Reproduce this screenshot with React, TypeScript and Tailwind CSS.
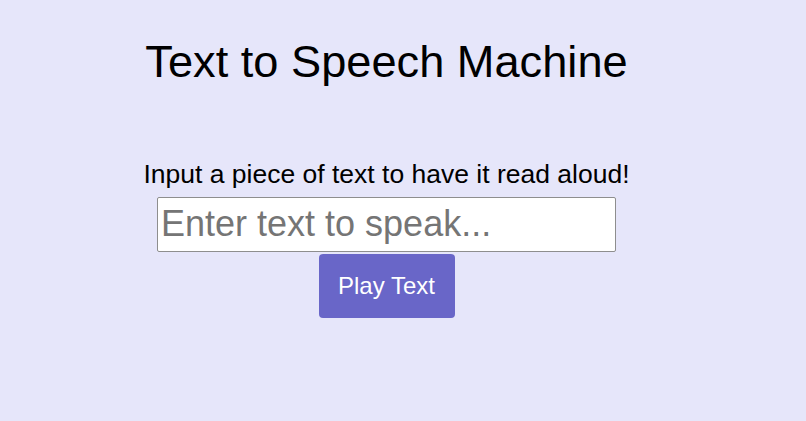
import { useState } from "react";

export default function App() {
  const [text, setText] = useState("");

  const speak = () => {
    if (!text || typeof window === "undefined" || !("speechSynthesis" in window)) return;
    window.speechSynthesis.speak(new SpeechSynthesisUtterance(text));
  };

  return (
    <div className="min-h-screen w-full bg-[#e6e6fa] font-['Liberation_Sans',Arial,sans-serif] text-black">
      <div className="flex w-[773px] flex-col items-center pt-[39px]">
        <h1 className="text-[45.2px] leading-[45px] font-normal">Text to Speech Machine</h1>

        <p className="mt-[77px] text-[26.5px] leading-[26.5px]">
          Input a piece of text to have it read aloud!
        </p>

        <input
          type="text"
          value={text}
          onChange={(e) => setText(e.target.value)}
          placeholder="Enter text to speak..."
          className="mt-[9px] h-[55px] w-[459px] rounded-[2px] border border-[#8e8e8e] bg-white pl-[3px] text-[36px] text-black outline-none placeholder:text-[#757575]"
        />

        <button
          onClick={speak}
          className="mt-[2px] h-[64px] w-[136px] rounded-[4px] bg-[#6966c8] text-[24px] text-white"
        >
          Play Text
        </button>
      </div>
    </div>
  );
}
